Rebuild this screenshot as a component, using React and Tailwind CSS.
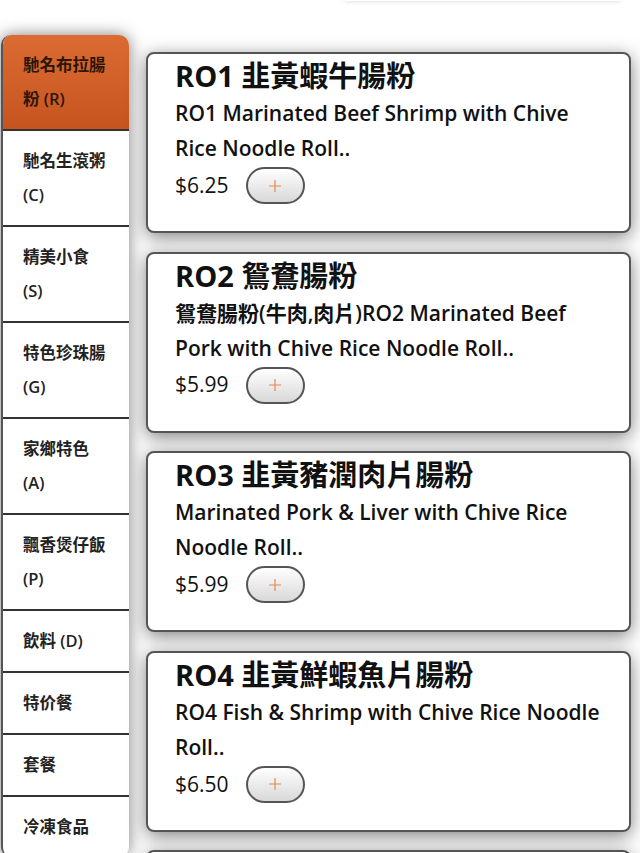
import React from 'react';

const categories = [
    { name: '馳名布拉腸粉 (R)', active: true },
    { name: '馳名生滾粥 (C)' },
    { name: '精美小食 (S)' },
    { name: '特色珍珠腸 (G)' },
    { name: '家鄉特色 (A)' },
    { name: '飄香煲仔飯 (P)' },
    { name: '飲料 (D)' },
    { name: '特价餐' },
    { name: '套餐' },
    { name: '冷凍食品' },
];

const items = [
    { title: 'RO1 韭黃蝦牛腸粉', desc: 'RO1 Marinated Beef Shrimp with Chive Rice Noodle Roll..', price: '$6.25' },
    { title: 'RO2 鴛鴦腸粉', desc: '鴛鴦腸粉(牛肉,肉片)RO2 Marinated Beef Pork with Chive Rice Noodle Roll..', price: '$5.99' },
    { title: 'RO3 韭黃豬潤肉片腸粉', desc: 'Marinated Pork & Liver with Chive Rice Noodle Roll..', price: '$5.99' },
    { title: 'RO4 韭黃鮮蝦魚片腸粉', desc: 'RO4 Fish & Shrimp with Chive Rice Noodle Roll..', price: '$6.50' },
    { title: 'RO5 韭黃鮮蝦腸粉', desc: 'RO5 Shrimp with Chive Rice Noodle Roll..', price: '$6.25' },
];

const font = { fontFamily: '"Open Sans", "Noto Sans CJK TC", sans-serif' };

const App = () => {
    return (
        <div className="w-[640px] h-[853px] overflow-hidden bg-white relative" style={font}>
            {/* top search bar edge */}
            <div className="absolute left-[345px] top-[-40px] w-[275px] h-[41px] bg-white shadow-[0_1px_4px_rgba(0,0,0,0.12)]" />

            <div className="flex items-start pt-[35px]">
                {/* Category sidebar */}
                <div className="ml-[1px] w-[128px] shrink-0 bg-white border-l-2 border-[#555] rounded-[10px] overflow-hidden shadow-[0_0_16px_rgba(0,0,0,0.5)]">
                    {categories.map((c, i) => (
                        <div
                            key={i}
                            className={`pl-[20px] pr-[18px] py-[13px] text-[16.5px] leading-[34px] font-semibold ${
                                i > 0 ? 'border-t-2 border-[#333]' : ''
                            } ${c.active ? 'bg-gradient-to-b from-[#dc6b32] to-[#c6541f] text-[#2b1608]' : 'text-[#222]'}`}
                        >
                            {c.name}
                        </div>
                    ))}
                </div>

                {/* Menu items */}
                <div className="flex-1 flex flex-col gap-[18.6px] pl-[17px] pr-[9px] pt-[17px]">
                    {items.map((it, i) => (
                        <div
                            key={i}
                            className="h-[181px] shrink-0 bg-white border-2 border-[#555] rounded-[8px] pl-[27px] pr-[14px] pt-[2px] shadow-[0_4px_18px_rgba(0,0,0,0.5)]"
                        >
                            <div className="text-[29px] leading-[40px] font-bold text-[#111]">{it.title}</div>
                            <div className="text-[21px] leading-[35px] font-semibold text-[#111]">{it.desc}</div>
                            <div className="flex items-center gap-[17px] mt-[1px]">
                                <span className="text-[21px] font-medium text-[#111]">{it.price}</span>
                                <button className="w-[59px] h-[37px] rounded-full border-2 border-[#555] bg-gradient-to-b from-white to-[#d8d8d8] flex items-center justify-center">
                                    <svg width="14" height="14" viewBox="0 0 14 14">
                                        <path d="M7 1v12M1 7h12" stroke="#e58a4e" strokeWidth="1.2" />
                                    </svg>
                                </button>
                            </div>
                        </div>
                    ))}
                </div>
            </div>
        </div>
    );
};

export default App;
